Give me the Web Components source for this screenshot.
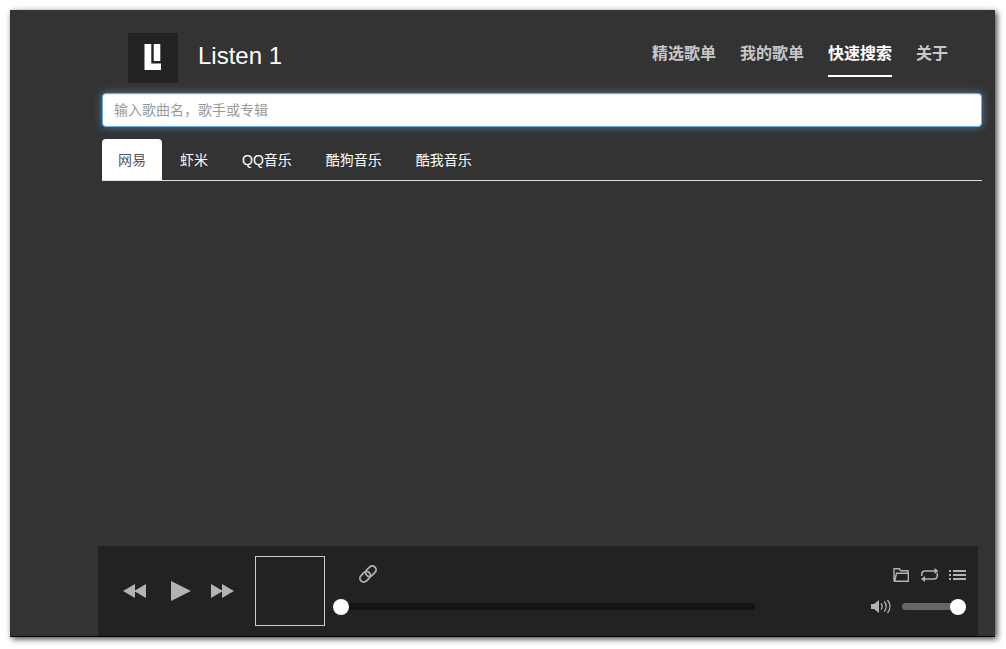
<!DOCTYPE html>
<html lang="zh-CN">
<head>
<meta charset="utf-8">
<title>Listen 1</title>
<style>
  body {
    margin: 0;
    background: #fff;
    color: #fff;
    font-family: "Liberation Sans", "Noto Sans CJK SC", sans-serif;
    font-size: 14px;
  }
</style>
</head>
<body>
<app-window>
  <site-header name="Listen 1">
    <nav-link href="#playlists">精选歌单</nav-link>
    <nav-link href="#mine">我的歌单</nav-link>
    <nav-link href="#search" active>快速搜索</nav-link>
    <nav-link href="#about">关于</nav-link>
  </site-header>
  <search-box placeholder="输入歌曲名，歌手或专辑"></search-box>
  <source-tabs>
    <source-tab active>网易</source-tab>
    <source-tab>虾米</source-tab>
    <source-tab>QQ音乐</source-tab>
    <source-tab>酷狗音乐</source-tab>
    <source-tab>酷我音乐</source-tab>
  </source-tabs>
  <player-bar slot="player"></player-bar>
</app-window>

<script>
// <app-window>
class AppWindow extends HTMLElement {
  constructor() {
    super();

    this.attachShadow({mode: 'open'});
  }

  connectedCallback() {
    this.shadowRoot.innerHTML = `
      <style>
        :host {
          display: flex;
          box-sizing: border-box;
          min-height: 100vh;
          padding: 10px 11px 12px 10px;
        }
        .window {
          flex: 1;
          min-width: 0;
          display: flex;
          flex-direction: column;
          background: #333;
          border-bottom: 1px solid #000;
          box-shadow: 2px 2px 6px rgba(0, 0, 0, .75);
        }
        main {
          flex: 1;
          padding: 23px 13px 0 92px;
        }
        footer {
          padding: 0 17px 0 88px;
        }
      </style>
      <div class="window">
        <main><slot></slot></main>
        <footer><slot name="player"></slot></footer>
      </div>
    `;
  }
}

customElements.define('app-window', AppWindow);

// <site-header>
class SiteHeader extends HTMLElement {
  constructor() {
    super();

    this.attachShadow({mode: 'open'});
  }

  connectedCallback() {
    this.shadowRoot.innerHTML = `
      <style>
        :host {
          display: flex;
          justify-content: space-between;
          height: 50px;
          margin-bottom: 10px;
          padding: 0 34px 0 26px;
        }
        .brand {
          display: flex;
          align-items: center;
          gap: 20px;
        }
        .logo {
          width: 50px;
          height: 50px;
          background: #222;
        }
        h1 {
          margin: 0;
          font-size: 24px;
          font-weight: normal;
          line-height: 46px;
          align-self: flex-start;
        }
        nav {
          display: flex;
          align-items: flex-start;
          gap: 24px;
        }
      </style>
      <div class="brand">
        <svg class="logo" viewBox="0 0 50 50" fill="#fff" aria-hidden="true">
          <path d="M16.500 11h6.800v19.500h9.700v6.500H16.500z"/>
          <path d="M25.700 11h6.600v17h-6.600z"/>
        </svg>
        <h1></h1>
      </div>
      <nav><slot></slot></nav>
    `;

    this.shadowRoot.querySelector('h1').textContent = this.getAttribute('name');
  }
}

customElements.define('site-header', SiteHeader);

// <nav-link>
class NavLink extends HTMLElement {
  constructor() {
    super();

    this.attachShadow({mode: 'open'});
  }

  connectedCallback() {
    this.shadowRoot.innerHTML = `
      <style>
        :host {
          display: block;
        }
        a {
          display: block;
          border-bottom: 2px solid transparent;
          color: #c8c8c8;
          font-size: 16px;
          font-weight: bold;
          line-height: 42px;
          text-decoration: none;
        }
        :host([active]) a, a:hover {
          color: #fff;
        }
        :host([active]) a {
          border-color: #fff;
        }
      </style>
      <a><slot></slot></a>
    `;

    this.shadowRoot.querySelector('a').setAttribute('href', this.getAttribute('href'));
  }
}

customElements.define('nav-link', NavLink);

// <search-box>
class SearchBox extends HTMLElement {
  constructor() {
    super();

    this.attachShadow({mode: 'open'});
  }

  connectedCallback() {
    this.shadowRoot.innerHTML = `
      <style>
        :host {
          display: block;
          margin-bottom: 12px;
        }
        input {
          display: block;
          box-sizing: border-box;
          width: 100%;
          height: 34px;
          padding: 6px 11px;
          border: 1px solid #66afe9;
          border-radius: 4px;
          outline: 0;
          background: #fff;
          box-shadow: inset 0 1px 1px rgba(0, 0, 0, .075), 0 0 8px rgba(102, 175, 233, .6);
          color: #555;
          font: inherit;
        }
        input::placeholder {
          color: #999;
        }
      </style>
      <input type="text">
    `;

    const input = this.shadowRoot.querySelector('input');
    const text = this.getAttribute('placeholder');

    input.setAttribute('placeholder', text);
    input.setAttribute('aria-label', text);
  }
}

customElements.define('search-box', SearchBox);

// <source-tabs>
class SourceTabs extends HTMLElement {
  constructor() {
    super();

    this.attachShadow({mode: 'open'});
  }

  connectedCallback() {
    this.shadowRoot.innerHTML = `
      <style>
        :host {
          display: flex;
          gap: 2px;
          border-bottom: 1px solid #ddd;
        }
      </style>
      <slot></slot>
    `;

    this.addEventListener('click', e => {
      const tab = e.target.closest('source-tab');

      if(tab) {
        this.querySelectorAll('source-tab').forEach(el => {
          el.toggleAttribute('active', el === tab);
        });
      }
    });
  }
}

customElements.define('source-tabs', SourceTabs);

// <source-tab>
class SourceTab extends HTMLElement {
  constructor() {
    super();

    this.attachShadow({mode: 'open'});
  }

  connectedCallback() {
    this.shadowRoot.innerHTML = `
      <style>
        :host {
          display: block;
        }
        button {
          display: block;
          height: 41px;
          padding: 0 16px 2px;
          border: 0;
          border-radius: 4px 4px 0 0;
          background: none;
          color: #fff;
          font: inherit;
          cursor: pointer;
        }
        :host([active]) button {
          background: #fff;
          color: #555;
        }
      </style>
      <button type="button"><slot></slot></button>
    `;
  }
}

customElements.define('source-tab', SourceTab);

// <icon-button>
const ICONS = {
  prev: [24, 24, '<path fill="currentColor" d="M0 12 12 5v14zM11 12l12-7v14z"/>'],
  play: [24, 24, '<path fill="currentColor" d="M4 2l20 10L4 22z"/>'],
  next: [24, 24, '<path fill="currentColor" d="M0 5l12 7-12 7zM11 5l12 7-12 7z"/>'],
  link: [18, 18, `<g fill="none" stroke="currentColor" stroke-width="1.8" transform="rotate(-45 9 8)">
    <rect x="-.8" y="4.200" width="11.600" height="7.600" rx="3.800"/>
    <rect x="7.200" y="4.200" width="11.600" height="7.600" rx="3.800"/></g>`],
  folder: [18, 18, `<path fill="none" stroke="currentColor" stroke-width="1.4"
    d="M2 16.300V3.700h5.500l1 2H16v2.600M2 16.300h14.300v-8H4.500L2.700 16"/>`],
  repeat: [18, 18, `<path fill="none" stroke="currentColor" stroke-width="1.5"
    d="M1.700 11V9.500q0-3.500 3.500-3.500h10M17.300 8v2.500q0 3.500-3.500 3.500H4"/>
    <path fill="currentColor" d="M14.500 3l4 3-4 3zM5 11l-4 3 4 3z"/>`],
  list: [18, 18, `<path fill="none" stroke="currentColor" stroke-width="2"
    d="M1 6h2M5 6h13M1 10h2M5 10h13M1 14h2M5 14h13"/>`],
  volume: [20, 18, `<path fill="currentColor" d="M1 7h3l5-4v13l-5-4H1z"/>
    <path fill="none" stroke="currentColor" stroke-width="1.3"
    d="M11 6.500q2.500 3 0 6M14.300 4.500q4 5 0 10M17.500 3q5 6.500 0 13"/>`]
};

class IconButton extends HTMLElement {
  constructor() {
    super();

    this.attachShadow({mode: 'open'});
  }

  connectedCallback() {
    const [width, height, shape] = ICONS[this.getAttribute('icon')];

    this.shadowRoot.innerHTML = `
      <style>
        :host {
          display: block;
        }
        button {
          display: block;
          padding: 0;
          border: 0;
          background: none;
          color: #b3b3b3;
          cursor: pointer;
        }
        button:hover {
          color: #fff;
        }
        svg {
          display: block;
          overflow: visible;
        }
      </style>
      <button type="button">
        <svg width="${width}" height="${height}" viewBox="0 0 ${width} ${height}">${shape}</svg>
      </button>
    `;

    this.shadowRoot.querySelector('button').setAttribute('aria-label', this.getAttribute('label'));
  }
}

customElements.define('icon-button', IconButton);

// <range-slider>
class RangeSlider extends HTMLElement {
  constructor() {
    super();

    this.attachShadow({mode: 'open'});
  }

  connectedCallback() {
    this.shadowRoot.innerHTML = `
      <style>
        :host {
          display: block;
        }
        input {
          display: block;
          -webkit-appearance: none;
          appearance: none;
          width: 100%;
          height: 16px;
          margin: 0;
          background: none;
        }
        input::-webkit-slider-runnable-track {
          height: 7px;
          border-radius: 4px;
          background: var(--track, #141414);
        }
        input::-webkit-slider-thumb {
          -webkit-appearance: none;
          width: 16px;
          height: 16px;
          margin-top: -4px;
          border-radius: 50%;
          background: #fff;
        }
      </style>
      <input type="range" min="0" max="100">
    `;

    const input = this.shadowRoot.querySelector('input');

    input.value = this.getAttribute('value');
    input.setAttribute('aria-label', this.getAttribute('label'));
  }
}

customElements.define('range-slider', RangeSlider);

// <player-bar>
class PlayerBar extends HTMLElement {
  constructor() {
    super();

    this.attachShadow({mode: 'open'});
  }

  connectedCallback() {
    this.shadowRoot.innerHTML = `
      <style>
        :host {
          display: flex;
          align-items: center;
          padding: 10px 12px 10px 25px;
          background: #222;
        }
        .controls {
          display: flex;
          gap: 20px;
          margin-right: 20px;
        }
        .cover {
          box-sizing: border-box;
          width: 70px;
          height: 70px;
          margin-right: 8px;
          border: 1px solid #ccc;
        }
        .progress, .extra {
          display: flex;
          flex-direction: column;
          gap: 14px;
          padding-bottom: 2px;
        }
        .progress {
          flex: 1;
        }
        .track {
          display: flex;
          padding-left: 26px;
        }
        .extra {
          width: 96px;
          margin-left: 115px;
        }
        .actions {
          display: flex;
          justify-content: flex-end;
          gap: 10px;
        }
        .volume {
          display: flex;
          align-items: center;
          gap: 12px;
        }
        .volume range-slider {
          flex: 1;
          --track: #666;
        }
      </style>
      <div class="controls">
        <icon-button icon="prev" label="上一首"></icon-button>
        <icon-button icon="play" label="播放"></icon-button>
        <icon-button icon="next" label="下一首"></icon-button>
      </div>
      <div class="cover"></div>
      <div class="progress">
        <div class="track">
          <icon-button icon="link" label="链接"></icon-button>
        </div>
        <range-slider value="0" label="播放进度"></range-slider>
      </div>
      <div class="extra">
        <div class="actions">
          <icon-button icon="folder" label="收藏"></icon-button>
          <icon-button icon="repeat" label="循环"></icon-button>
          <icon-button icon="list" label="播放列表"></icon-button>
        </div>
        <div class="volume">
          <icon-button icon="volume" label="静音"></icon-button>
          <range-slider value="100" label="音量"></range-slider>
        </div>
      </div>
    `;
  }
}

customElements.define('player-bar', PlayerBar);
</script>
</body>
</html>
